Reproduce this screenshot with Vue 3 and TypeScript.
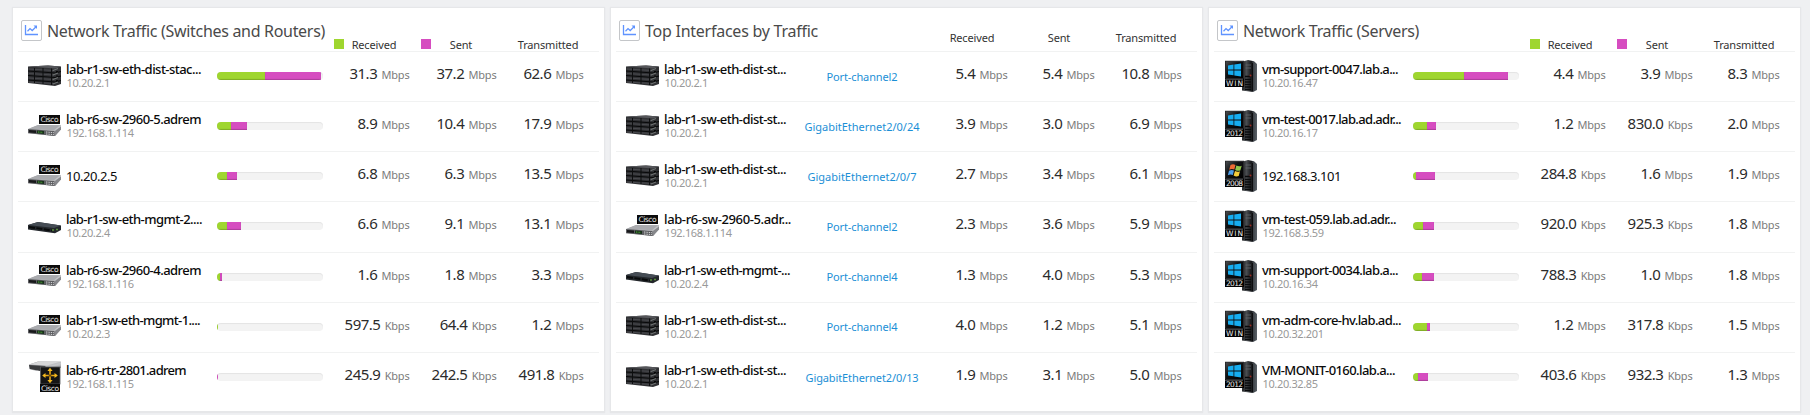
<script setup lang="ts">
type IconKind = 'stack' | 'cisco' | 'mgmt' | 'router' | 'win' | 'w2012' | 'w2008'
interface Row {
  icon: IconKind
  name: string
  width: number
  ip?: string
  bar?: [number, number]
  port?: string
  portWidth?: number
  values: string[]
}
interface Panel {
  title: string
  width: number
  legend: boolean
  rows: Row[]
}

const columns = ['Received', 'Sent', 'Transmitted']

const device = (icon: IconKind, name: string, width: number, ip: string, bar: [number, number], values: string[]): Row =>
  ({ icon, name, width, ip, bar, values })
const iface = (icon: IconKind, name: string, width: number, ip: string, port: string, portWidth: number, values: string[]): Row =>
  ({ icon, name, width, ip, port, portWidth, values })

const panels: Panel[] = [
  {
    title: 'Network Traffic (Switches and Routers)', width: 278, legend: true,
    rows: [
      device('stack', 'lab-r1-sw-eth-dist-stac...', 135, '10.20.2.1', [48, 56], ['31.3 Mbps', '37.2 Mbps', '62.6 Mbps']),
      device('cisco', 'lab-r6-sw-2960-5.adrem', 135, '192.168.1.114', [14, 16], ['8.9 Mbps', '10.4 Mbps', '17.9 Mbps']),
      device('cisco', '10.20.2.5', 51, '', [10, 10], ['6.8 Mbps', '6.3 Mbps', '13.5 Mbps']),
      device('mgmt', 'lab-r1-sw-eth-mgmt-2....', 136, '10.20.2.4', [10, 14], ['6.6 Mbps', '9.1 Mbps', '13.1 Mbps']),
      device('cisco', 'lab-r6-sw-2960-4.adrem', 135, '192.168.1.116', [3, 2], ['1.6 Mbps', '1.8 Mbps', '3.3 Mbps']),
      device('cisco', 'lab-r1-sw-eth-mgmt-1....', 134, '10.20.2.3', [1, 0], ['597.5 Kbps', '64.4 Kbps', '1.2 Mbps']),
      device('router', 'lab-r6-rtr-2801.adrem', 120, '192.168.1.115', [0, 1], ['245.9 Kbps', '242.5 Kbps', '491.8 Kbps']),
    ],
  },
  {
    title: 'Top Interfaces by Traffic', width: 173, legend: false,
    rows: [
      iface('stack', 'lab-r1-sw-eth-dist-st...', 122, '10.20.2.1', 'Port-channel2', 71, ['5.4 Mbps', '5.4 Mbps', '10.8 Mbps']),
      iface('stack', 'lab-r1-sw-eth-dist-st...', 122, '10.20.2.1', 'GigabitEthernet2/0/24', 115, ['3.9 Mbps', '3.0 Mbps', '6.9 Mbps']),
      iface('stack', 'lab-r1-sw-eth-dist-st...', 122, '10.20.2.1', 'GigabitEthernet2/0/7', 109, ['2.7 Mbps', '3.4 Mbps', '6.1 Mbps']),
      iface('cisco', 'lab-r6-sw-2960-5.adr...', 127, '192.168.1.114', 'Port-channel2', 71, ['2.3 Mbps', '3.6 Mbps', '5.9 Mbps']),
      iface('mgmt', 'lab-r1-sw-eth-mgmt-...', 126, '10.20.2.4', 'Port-channel4', 71, ['1.3 Mbps', '4.0 Mbps', '5.3 Mbps']),
      iface('stack', 'lab-r1-sw-eth-dist-st...', 122, '10.20.2.1', 'Port-channel4', 71, ['4.0 Mbps', '1.2 Mbps', '5.1 Mbps']),
      iface('stack', 'lab-r1-sw-eth-dist-st...', 122, '10.20.2.1', 'GigabitEthernet2/0/13', 113, ['1.9 Mbps', '3.1 Mbps', '5.0 Mbps']),
    ],
  },
  {
    title: 'Network Traffic (Servers)', width: 176, legend: true,
    rows: [
      device('win', 'vm-support-0047.lab.a...', 136, '10.20.16.47', [51, 44], ['4.4 Mbps', '3.9 Mbps', '8.3 Mbps']),
      device('w2012', 'vm-test-0017.lab.ad.adr...', 139, '10.20.16.17', [14, 9], ['1.2 Mbps', '830.0 Kbps', '2.0 Mbps']),
      device('w2008', '192.168.3.101', 79, '', [3, 19], ['284.8 Kbps', '1.6 Mbps', '1.9 Mbps']),
      device('win', 'vm-test-059.lab.ad.adr...', 134, '192.168.3.59', [10, 11], ['920.0 Kbps', '925.3 Kbps', '1.8 Mbps']),
      device('w2012', 'vm-support-0034.lab.a...', 136, '10.20.16.34', [9, 12], ['788.3 Kbps', '1.0 Mbps', '1.8 Mbps']),
      device('win', 'vm-adm-core-hv.lab.ad...', 139, '10.20.32.201', [14, 3], ['1.2 Mbps', '317.8 Kbps', '1.5 Mbps']),
      device('w2012', 'VM-MONIT-0160.lab.a...', 133, '10.20.32.85', [5, 10], ['403.6 Kbps', '932.3 Kbps', '1.3 Mbps']),
    ],
  },
]

// Tracks a label so that it fills the given width.
const vFit = {
  mounted(el: HTMLElement, binding: { value: number }) {
    const count = (el.textContent ?? '').length
    el.style.letterSpacing = `${(binding.value - el.getBoundingClientRect().width) / count}px`
  },
}
</script>

<template>
  <main class="board">
    <svg class="defs" aria-hidden="true">
      <defs>
        <linearGradient id="silver" x1="0" y1="0" x2="1" y2="1">
          <stop offset="0" stop-color="#8d8e92" /><stop offset="0.6" stop-color="#c6c7ca" /><stop offset="1" stop-color="#77787b" />
        </linearGradient>
        <linearGradient id="tower" x1="0" y1="0" x2="1" y2="0">
          <stop offset="0" stop-color="#1c1e20" /><stop offset="0.3" stop-color="#4a4d50" /><stop offset="0.62" stop-color="#15171a" /><stop offset="0.75" stop-color="#3d4247" /><stop offset="1" stop-color="#5a6168" />
        </linearGradient>
        <linearGradient id="screen" x1="0" y1="0" x2="1" y2="1">
          <stop offset="0" stop-color="#4a4d50" /><stop offset="0.4" stop-color="#101214" /><stop offset="1" stop-color="#000" />
        </linearGradient>
      </defs>
    </svg>

    <section v-for="panel in panels" :key="panel.title" class="panel">
      <header class="head">
        <span class="badge">
          <svg width="15" height="13" viewBox="0 0 15 13" fill="none" stroke="#5f93ff">
            <path d="M1.5 1V10.5H14" stroke-width="1.3" />
            <path d="M3.5 7.2L6 4.6L8.2 6.6L12 2.7" stroke-width="1.3" />
            <path d="M9.5 1.5H13V5Z" fill="#5f93ff" stroke="none" />
          </svg>
        </span>
        <h2><span v-fit="panel.width" class="fit">{{ panel.title }}</span></h2>
        <div class="cols labels" :class="{ legend: panel.legend }">
          <span v-for="(c, i) in columns" :key="c" class="label">
            <i v-if="panel.legend && i < 2" class="swatch" :class="{ sent: i === 1 }"></i>{{ c }}
          </span>
        </div>
      </header>

      <div v-for="(row, n) in panel.rows" :key="n" class="row">
        <svg class="icon" width="34" height="32" viewBox="0 0 34 32">
          <g v-if="row.icon === 'stack'">
            <path d="M0 6.5L20 5.5L33 6.5V24L27 26L0 23Z" fill="#303134" />
            <path d="M0 6.5L20 5.5L33 6.5L27 8.5Z" fill="#55565a" />
            <path d="M0 11L27 13L33 11.5M0 15.5L27 17.5L33 16M0 20L27 22L33 20.5" fill="none" stroke="#08090a" stroke-width="1.2" />
            <path d="M1 9L26 10.5M1 13.5L26 15M1 18L26 19.5M1 22L26 23.5" stroke="#4b4c50" stroke-width="0.9" />
            <path d="M6.5 8V23M15 8V24M23.5 8.5V25" stroke="#0d0e0f" />
            <path d="M25 10.5L30 8.5M25 15L30 13M25 19.5L30 17.5M25 24L30 22" stroke="#6d7171" stroke-width="1.1" />
            <path d="M28 11.5h2M28 16h2M28 20.5h2" stroke="#080808" />
          </g>
          <g v-else-if="row.icon === 'cisco'">
            <path d="M0 19L10 15H33V19L27 26L0 23Z" fill="url(#silver)" />
            <path d="M1 18.7L10 15.3H32L26 20.3Z" fill="#aaabaf" />
            <path d="M0 19L26.5 21V26L0 23.3Z" fill="#5c5d60" />
            <path d="M1 20L8 20.6V23L1 22.4Z" fill="#17181a" />
            <path d="M9 20.4L16 21V24L9 23.3Z" fill="#17301a" />
            <path d="M10 22L15 22.4" stroke="#52ad36" stroke-dasharray="1.4 1" />
            <path d="M18 22L26 22.7M18 24L26 24.6" stroke="#d2d3d5" stroke-dasharray="1.4 1" />
            <path d="M27 21L33 16.5V19.5L27 26Z" fill="#87888c" />
            <rect x="11" y="5" width="21" height="9" fill="#0b0b0b" />
            <text x="12.5" y="12.3" class="tag" textLength="18">Cisco</text>
          </g>
          <g v-else-if="row.icon === 'mgmt'">
            <path d="M0 15L10 12L33 15.5V20L27 23.2L0 19.5Z" fill="#23272b" />
            <path d="M0 15L10 12L33 15.5L26 18Z" fill="#454c54" />
            <path d="M1 17L24 20.5" stroke="#080a0b" stroke-width="2" stroke-dasharray="6 1.5" />
            <path d="M24 20h2M28 19.5h2" stroke="#598f3c" stroke-width="1.5" />
          </g>
          <g v-else-if="row.icon === 'router'">
            <path d="M1 3.5L10 0.5H33V7H13L8 10L1 8Z" fill="url(#silver)" />
            <path d="M1 3.5L11 0.5H33L19 4.5Z" fill="#d7d7d8" />
            <path d="M1 4L18 5L12 10L2 8Z" fill="#393a3c" />
            <rect x="12.5" y="6" width="19.5" height="17" fill="#151515" stroke="#55575a" stroke-width="0.8" />
            <path d="M22 8V21M15.5 14.5H28.5" stroke="#e9a916" stroke-width="1.6" />
            <path d="M22 6.8L24.6 10H19.4ZM22 22.2L19.4 19H24.6ZM14.2 14.5L17.5 11.9V17.1ZM29.8 14.5L26.5 11.9V17.1Z" fill="#f3b91f" />
            <circle cx="22" cy="14.5" r="1.3" fill="#6c4c0c" />
            <rect x="12" y="23" width="20" height="8" fill="#080808" />
            <text x="13" y="30" class="tag" textLength="18">Cisco</text>
          </g>
          <g v-else>
            <path d="M19 1.5L24 0L30 1.2L33 4V30L29 32L18 30.5Z" fill="url(#tower)" />
            <path d="M28.5 3V31" stroke="#0b0c0d" />
            <path d="M21 16.5H27M21 19.5H27M21 22H27M21 24.5H27M21 27H27M21 29.3H27" stroke="#090a0b" stroke-width="1.3" />
            <path d="M21.5 5H27M21.5 8H27" stroke="#666b70" stroke-width="0.8" />
            <circle cx="26.5" cy="15.5" r="1" fill="#9c2b22" />
            <rect x="1" y="0.8" width="19" height="26.2" fill="#020202" />
            <rect x="1.8" y="1.5" width="17.5" height="17" fill="url(#screen)" stroke="#4a4d50" stroke-width="0.5" />
            <g v-if="row.icon === 'w2008'">
              <path d="M6.5 5Q9 3.5 11.5 5L10.3 9.6Q7.8 8.5 5.2 9.8Z" fill="#ef6b35" />
              <path d="M12.3 5.5Q15 7 17.7 5.8L16.3 10.4Q13.7 11.5 11.2 10Z" fill="#92c84b" />
              <path d="M5 10.7Q7.6 9.4 10 10.5L8.8 15Q6.4 14 3.8 15.2Z" fill="#4f9fea" />
              <path d="M11 11Q13.4 12.5 16 11.3L14.7 16Q12.1 17.1 9.6 15.5Z" fill="#f4cd3b" />
            </g>
            <path v-else d="M4 5.4L9.5 4.5V9.5H4ZM10.3 4.4L17 3.4V9.5H10.3ZM4 10.4H9.5V15.3L4 14.4ZM10.3 10.4H17V16.5L10.3 15.5Z" fill="#16adf0" />
            <path d="M1 19.5H19" stroke="#505255" stroke-width="0.8" />
            <text x="2" y="26.3" class="tag" textLength="17">{{ row.icon === 'win' ? 'WIN' : row.icon.slice(1) }}</text>
          </g>
        </svg>
        <div class="who" :class="{ single: !row.ip }">
          <div class="name"><span v-fit="row.width" class="fit">{{ row.name }}</span></div>
          <div v-if="row.ip" class="ip">{{ row.ip }}</div>
        </div>
        <div v-if="row.bar" class="bar">
          <span class="seg" :style="{ width: row.bar[0] + 'px' }"></span>
          <span class="seg sent" :style="{ width: row.bar[1] + 'px' }"></span>
        </div>
        <div v-else class="port"><span v-fit="row.portWidth" class="fit">{{ row.port }}</span></div>
        <div class="cols">
          <span v-for="(v, i) in row.values" :key="i" class="value">
            <b>{{ v.split(' ')[0] }}</b><small>{{ v.split(' ')[1] }}</small>
          </span>
        </div>
      </div>
    </section>
  </main>
</template>

<style>
body {
  background: #eff0f2;
}
</style>

<style scoped>
.board {
  box-sizing: border-box;
  height: 415px;
  padding: 8px 0 0 13px;
  display: flex;
  gap: 7px;
  overflow: hidden;
  background: #eff0f2;
  font-family: "Noto Sans", "Open Sans", sans-serif;
}
.defs {
  position: absolute;
  width: 0;
  height: 0;
}
.panel {
  box-sizing: border-box;
  width: 591px;
  height: 403px;
  padding: 0 5px;
  background: #fff;
  box-shadow: 0 0 1px 1px #e6e7e9, 0 1px 1px 1px #e6e7e9;
}
.head {
  display: flex;
  height: 43px;
  padding-left: 3px;
}
.badge {
  box-sizing: border-box;
  width: 21px;
  height: 21px;
  margin: 12px 5px 0 0;
  border: 1px solid #c4c6c9;
  border-radius: 2px;
  display: flex;
  align-items: center;
  justify-content: center;
}
h2 {
  margin: 12px 0 0;
  font-size: 16px;
  line-height: 22px;
  font-weight: 400;
  color: #4a4a4a;
  white-space: nowrap;
}
.fit {
  display: inline-block;
  white-space: nowrap;
}
.cols {
  display: grid;
  grid-template-columns: repeat(3, 87px);
  margin-left: auto;
  margin-right: 7.5px;
}
.labels {
  height: 16px;
  margin-top: 22px;
  font-size: 11px;
  line-height: 16px;
  letter-spacing: -0.15px;
  color: #333;
}
.labels.legend {
  margin-top: 29px;
}
.label {
  position: relative;
  text-align: center;
}
.swatch {
  position: absolute;
  left: 3.5px;
  top: 2px;
  width: 10px;
  height: 10px;
  background: #9fd62f;
}
.sent {
  background: #d64dc0;
}
.row {
  box-sizing: border-box;
  height: 50px;
  border-top: 1px solid #f1f2f2;
  display: flex;
  align-items: flex-start;
  padding-left: 10px;
}
.row:nth-child(5) {
  height: 51px;
}
.icon {
  flex: none;
  margin-top: 8px;
}
.row:nth-child(6) .icon,
.row:nth-child(7) .icon {
  margin-top: 7px;
}
.tag {
  font: 7.5px "DejaVu Sans", sans-serif;
  fill: #e8e8e8;
}
.who {
  width: 142px;
  margin: 8px 0 0 4px;
}
.name {
  height: 18px;
  font-size: 13px;
  line-height: 18px;
  font-weight: 500;
  color: #0a0a0a;
}
.ip {
  font-size: 11px;
  line-height: 14px;
  margin-top: -2px;
  padding-left: 0.5px;
  letter-spacing: -0.36px;
  color: #999;
}
.single {
  margin-top: 15px;
}
.single .name {
  font-weight: 400;
}
.bar {
  width: 106px;
  height: 8px;
  margin: 20px 0 0 9px;
  border-radius: 4px;
  background: #f3f3f3;
  box-shadow: inset 0 1px 1px #e4e4e4;
  display: flex;
  overflow: hidden;
}
.seg {
  background: #9fd62f;
  box-shadow: inset 0 -1px 1px rgba(0, 0, 0, 0.2);
}
.seg.sent {
  background: #d64dc0;
}
.port {
  width: 120px;
  margin: 17px 0 0 -4px;
  text-align: center;
  font-size: 11px;
  line-height: 16px;
  color: #1b8fd6;
}
.row:nth-child(6) .port,
.row:nth-child(7) .port {
  margin-top: 16px;
}
.value {
  display: flex;
  justify-content: flex-end;
  align-items: baseline;
  padding-right: 8px;
  margin-top: 10px;
  line-height: 22px;
  white-space: nowrap;
}
.value b {
  font-size: 15px;
  font-weight: 400;
  letter-spacing: -0.5px;
  color: #2b2b2b;
}
.value small {
  margin-left: 4.3px;
  font-size: 11px;
  letter-spacing: -0.2px;
  color: #7b7b7b;
}
</style>
